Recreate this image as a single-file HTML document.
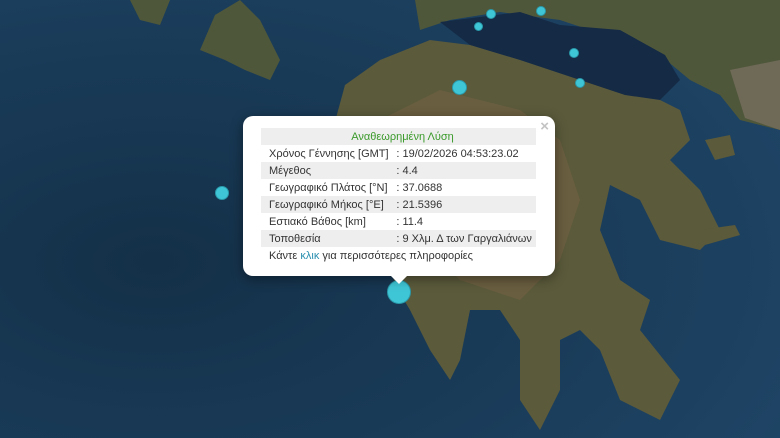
<!DOCTYPE html>
<html><head><meta charset="utf-8"><style>
body{margin:0;width:780px;height:438px;overflow:hidden;font-family:"Liberation Sans",sans-serif}
#map{position:absolute;left:0;top:0}
.pop{position:absolute;left:243px;top:116px;width:312px;height:160px;background:#fff;border-radius:10px;box-shadow:0 3px 12px rgba(0,0,0,.4)}
.tip{position:absolute;left:390px;top:275px;width:0;height:0;border-left:9px solid transparent;border-right:9px solid transparent;border-top:9px solid #fff}
.x{position:absolute;right:6px;top:2px;color:#c3c3c3;font-size:15px;font-weight:bold}
table{position:absolute;left:18px;top:12px;border-collapse:collapse;font-size:11px;color:#333;width:275px}
td{height:17px;padding:0 0 0 8px;white-space:nowrap}
td+td{padding-left:4px}
tr.g td{background:#eee}
.h{text-align:center;color:#3a9a2a}
.c{position:absolute;border-radius:50%;background:#3fc6d6;border:1px solid #2a9aab}
</style></head><body>
<svg id="map" width="780" height="438" viewBox="0 0 780 438">
<defs><radialGradient id="s" cx="0.2" cy="0.6" r="0.9"><stop offset="0" stop-color="#143048"/><stop offset="1" stop-color="#1e4465"/></radialGradient></defs>
<rect width="780" height="438" fill="url(#s)"/>
<polygon fill="#4f573a" points="415,0 780,0 780,130 740,120 720,95 690,80 660,55 620,40 560,20 500,12 450,20 420,30"/>
<polygon fill="#6f6a58" points="730,70 780,60 780,130 745,118"/>
<polygon fill="#142a45" points="440,22 520,12 560,25 620,30 665,55 680,80 660,100 620,95 580,80 520,60 470,45"/>
<polygon fill="#5b5a3b" points="345,85 380,60 430,40 470,45 520,60 580,80 625,95 660,100 680,110 690,140 670,160 700,190 720,230 700,250 660,240 640,200 610,185 600,230 620,280 650,300 640,330 680,380 660,420 620,400 600,350 580,330 560,340 560,390 540,430 520,400 520,340 500,310 470,310 460,360 450,380 430,350 410,310 398,290 390,270 360,260 340,200 330,140"/>
<polygon fill="#6a5e40" points="380,120 440,90 520,110 560,140 580,200 560,260 520,300 460,280 420,240 400,180"/>
<polygon fill="#4f573a" points="200,50 215,15 240,0 260,20 280,60 270,80 245,70 225,60"/>
<polygon fill="#5b5a3b" points="705,140 730,135 735,155 715,160"/>
<polygon fill="#5b5a3b" points="700,230 735,225 740,235 705,245"/>
<polygon fill="#4f573a" points="130,0 170,0 160,25 140,20"/>
</svg>
<div class="c" style="left:215px;top:186px;width:12px;height:12px"></div>
<div class="c" style="left:452px;top:80px;width:13px;height:13px"></div>
<div class="c" style="left:575px;top:78px;width:8px;height:8px"></div>
<div class="c" style="left:569px;top:48px;width:8px;height:8px"></div>
<div class="c" style="left:486px;top:9px;width:8px;height:8px"></div>
<div class="c" style="left:474px;top:22px;width:7px;height:7px"></div>
<div class="c" style="left:536px;top:6px;width:8px;height:8px"></div>
<div class="c" style="left:387px;top:280px;width:22px;height:22px"></div>
<div class="pop"><span class="x">×</span>
<table>
<tr class="g"><td colspan="2" class="h">Αναθεωρημένη Λύση</td></tr>
<tr><td>Χρόνος Γέννησης [GMT]</td><td>: 19/02/2026 04:53:23.02</td></tr>
<tr class="g"><td>Μέγεθος</td><td>: 4.4</td></tr>
<tr><td>Γεωγραφικό Πλάτος [°N]</td><td>: 37.0688</td></tr>
<tr class="g"><td>Γεωγραφικό Μήκος [°E]</td><td>: 21.5396</td></tr>
<tr><td>Εστιακό Βάθος [km]</td><td>: 11.4</td></tr>
<tr class="g"><td>Τοποθεσία</td><td>: 9 Χλμ. Δ των Γαργαλιάνων</td></tr>
<tr><td colspan="2">Κάντε <span style="color:#2a8fb0">κλικ</span> για περισσότερες πληροφορίες</td></tr>
</table></div>
<div class="tip"></div>
</body></html>
